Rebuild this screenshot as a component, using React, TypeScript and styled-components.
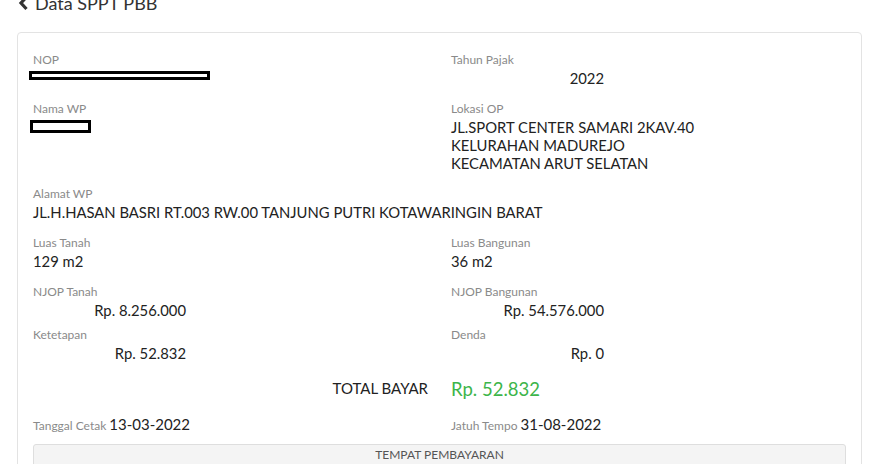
import styled, { createGlobalStyle } from "styled-components";

const GlobalStyle = createGlobalStyle`
  html, body {
    margin: 0;
    padding: 0;
    background: #ffffff;
  }
  body {
    font-family: Lato, "Liberation Sans", Arial, sans-serif;
    color: #222222;
    overflow: hidden;
  }
`;

const Page = styled.div`
  padding: 0 18px 0 17px;
`;

const Header = styled.h2`
  display: flex;
  align-items: center;
  gap: 6px;
  margin: -14px 0 0 1px;
  height: 34px;

  font-size: 18px;
  font-weight: 400;
  color: #333333;
`;

const Card = styled.div`
  border: 1px solid #e3e3e3;
  border-radius: 4px;
  padding: 20px 15px 20px 15px;
  margin-top: 12px;
`;

const Grid = styled.div`
  display: grid;
  grid-template-columns: 418px 1fr;
`;

const Field = styled.div<{ $gap?: number }>`
  margin-bottom: ${({ $gap }) => ($gap ?? 15)}px;
`;

const Label = styled.div`
  font-size: 12px;
  line-height: 14px;
  margin-bottom: 2px;
  color: #8a8a8a;
`;

const Value = styled.div<{ $right?: boolean }>`
  font-size: 14.8px;
  line-height: 18px;
  color: #222222;
  ${({ $right }) => ($right ? "width: 153px; text-align: right;" : "")}
`;

const Redacted = styled.div<{ $w: number }>`
  width: ${({ $w }) => $w}px;
  height: 3px;
  border: 3px solid #000000;
  background: #ffffff;
  margin: 4px 0 0 -4px;
`;

const RedactedBox = styled(Redacted)`
  height: 7px;
  margin: 4px 0 0 -3px;
`;

const Wide = styled.div`
  grid-column: 1 / -1;
`;

const TotalLabel = styled.div`
  text-align: right;
  padding-right: 23px;
  font-size: 15px;
  line-height: 24px;
  color: #222222;
  align-self: center;
`;

const TotalValue = styled.div`
  font-size: 18.5px;
  line-height: 24px;
  color: #3db54a;
  padding-top: 2px;
`;

const TotalRow = styled.div`
  grid-column: 1 / -1;
  display: grid;
  grid-template-columns: 418px 1fr;
  margin: 13px 0 0;
`;

const DateRow = styled.div`
  grid-column: 1 / -1;
  display: grid;
  grid-template-columns: 418px 1fr;
  margin-top: 14px;
`;

const DateItem = styled.div`
  display: flex;
  align-items: baseline;
  gap: 3px;
  line-height: 18px;
`;

const DateLabel = styled.span`
  font-size: 12px;
  color: #8a8a8a;
`;

const DateValue = styled.span`
  font-size: 15px;
  color: #222222;
`;

const PayButton = styled.button`
  display: block;
  width: 100%;
  margin-top: 9px;
  height: 30px;
  border: 1px solid #dedede;
  border-radius: 3px;
  background: #f4f4f4;
  font-family: inherit;
  font-size: 12px;
  color: #555555;
  padding: 0 0 9px;
`;

const ChevronLeft = () => (
  <svg width="11" height="16" viewBox="0 0 11 16" aria-hidden="true">
    <path d="M8.5 2 L3 8 L8.5 14" fill="none" stroke="#333" strokeWidth="3.2" />
  </svg>
);

export default function App() {
  return (
    <>
      <GlobalStyle />
      <Page>
        <Header>
          <ChevronLeft />
          Data SPPT PBB
        </Header>
        <Card>
          <Grid>
            <Field>
              <Label>NOP</Label>
              <Redacted $w={175} />
            </Field>
            <Field>
              <Label>Tahun Pajak</Label>
              <Value $right>2022</Value>
            </Field>
            <Field>
              <Label>Nama WP</Label>
              <RedactedBox $w={55} />
            </Field>
            <Field>
              <Label>Lokasi OP</Label>
              <Value>JL.SPORT CENTER SAMARI 2KAV.40</Value>
              <Value>KELURAHAN MADUREJO</Value>
              <Value>KECAMATAN ARUT SELATAN</Value>
            </Field>
            <Wide>
              <Field>
                <Label>Alamat WP</Label>
                <Value>JL.H.HASAN BASRI RT.003 RW.00 TANJUNG PUTRI KOTAWARINGIN BARAT</Value>
              </Field>
            </Wide>
            <Field>
              <Label>Luas Tanah</Label>
              <Value>129 m2</Value>
            </Field>
            <Field>
              <Label>Luas Bangunan</Label>
              <Value>36 m2</Value>
            </Field>
            <Field $gap={9}>
              <Label>NJOP Tanah</Label>
              <Value $right>Rp. 8.256.000</Value>
            </Field>
            <Field $gap={9}>
              <Label>NJOP Bangunan</Label>
              <Value $right>Rp. 54.576.000</Value>
            </Field>
            <Field $gap={0}>
              <Label>Ketetapan</Label>
              <Value $right>Rp. 52.832</Value>
            </Field>
            <Field $gap={0}>
              <Label>Denda</Label>
              <Value $right>Rp. 0</Value>
            </Field>
            <TotalRow>
              <TotalLabel>TOTAL BAYAR</TotalLabel>
              <TotalValue>Rp. 52.832</TotalValue>
            </TotalRow>
            <DateRow>
              <DateItem>
                <DateLabel>Tanggal Cetak</DateLabel>
                <DateValue>13-03-2022</DateValue>
              </DateItem>
              <DateItem>
                <DateLabel>Jatuh Tempo</DateLabel>
                <DateValue>31-08-2022</DateValue>
              </DateItem>
            </DateRow>
          </Grid>
          <PayButton>TEMPAT PEMBAYARAN</PayButton>
        </Card>
      </Page>
    </>
  );
}
